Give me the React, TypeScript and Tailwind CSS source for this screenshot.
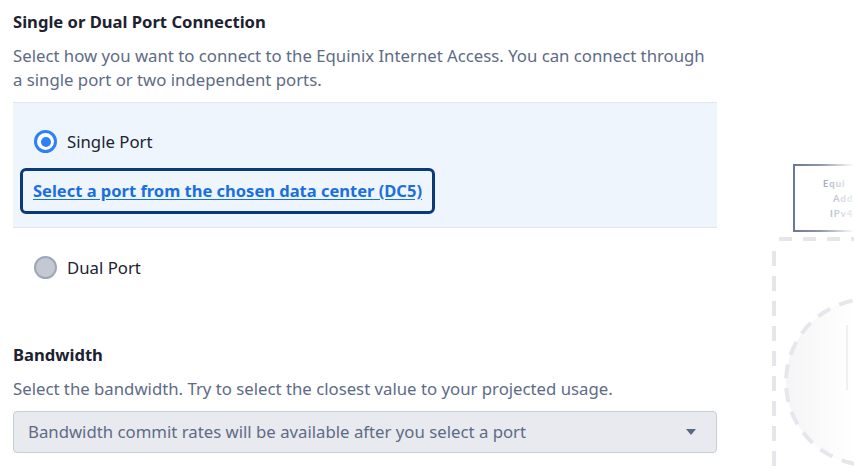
import React from "react";

const Radio = ({ checked }: { checked: boolean }) =>
  checked ? (
    <span className="flex h-[23px] w-[23px] shrink-0 items-center justify-center rounded-full border-[3px] border-[#2f7ff7] bg-white">
      <span className="h-[10px] w-[10px] rounded-full bg-[#2f7ff7]" />
    </span>
  ) : (
    <span className="h-[23px] w-[23px] shrink-0 rounded-full border-2 border-[#9ea7b8] bg-[#c3c8d3]" />
  );

// faded diagram on the right edge
const Diagram = () => (
  <svg width="137" height="472" viewBox="0 0 137 472" className="block">
    <defs>
      <linearGradient id="boxFade" x1="76" y1="0" x2="137" y2="0" gradientUnits="userSpaceOnUse">
        <stop offset="0" stopColor="#6b7894" />
        <stop offset="0.45" stopColor="#8d97ad" />
        <stop offset="1" stopColor="#ffffff" />
      </linearGradient>
      <linearGradient id="textFade" x1="100" y1="0" x2="137" y2="0" gradientUnits="userSpaceOnUse">
        <stop offset="0" stopColor="#97a1b7" />
        <stop offset="1" stopColor="#eceef3" />
      </linearGradient>
      <linearGradient id="circleFade" x1="69" y1="0" x2="137" y2="0" gradientUnits="userSpaceOnUse">
        <stop offset="0" stopColor="#f5f5f7" />
        <stop offset="1" stopColor="#ffffff" />
      </linearGradient>
    </defs>
    <rect x="77" y="165" width="120" height="66" fill="white" stroke="url(#boxFade)" strokeWidth="2" />
    <g fontFamily="Lato, 'Noto Sans', sans-serif" fontWeight="700" fontSize="9.5" fill="url(#textFade)" letterSpacing="1">
      <text x="106" y="187">Equi</text>
      <text x="116" y="202">Add</text>
      <text x="113" y="217">IPv4</text>
    </g>
    <line x1="62" y1="239" x2="137" y2="239" stroke="#e4e6eb" strokeWidth="4" strokeDasharray="13 11" />
    <line x1="57" y1="251" x2="57" y2="472" stroke="#e4e6eb" strokeWidth="4" strokeDasharray="15 10" />
    <circle cx="152" cy="382" r="83" fill="url(#circleFade)" stroke="#e6e7ec" strokeWidth="4" strokeDasharray="14 10" />
    <line x1="130" y1="325" x2="130" y2="390" stroke="#eef0f4" strokeWidth="2" />
  </svg>
);

export default function App() {
  return (
    <div className="flex h-[472px] w-[854px] overflow-hidden bg-white font-['Noto_Sans',sans-serif]">
      <div className="w-[717px] shrink-0 pl-[13px]">
        <h2 className="pt-[10px] text-[16.6px] leading-6 font-bold text-[#1c2230]">
          Single or Dual Port Connection
        </h2>
        <p className="mt-[10px] text-[16.75px] leading-6 text-[#5e6b86]">
          Select how you want to connect to the Equinix Internet Access. You can connect through a single
          port or two independent ports.
        </p>

        <div className="mt-[10px] border-y border-[#e3e6eb] bg-[#eff5fd] pt-[27px] pb-[13px]">
          <label className="ml-[21px] flex h-[23px] items-center gap-[10px]">
            <Radio checked />
            <span className="text-[16.75px] leading-6 text-[#1c2230]">Single Port</span>
          </label>
          <div className="mt-[15px] ml-[7px] flex h-[46px] w-fit items-center rounded-[6px] border-[3px] border-[#0a3a78] px-[10px]">
            <a href="#" className="text-[16.5px] leading-6 font-bold text-[#1a6fe0] underline underline-offset-2">
              Select a port from the chosen data center (DC5)
            </a>
          </div>
        </div>

        <label className="mt-[28px] ml-[21px] flex h-[23px] items-center gap-[10px]">
          <Radio checked={false} />
          <span className="text-[16.75px] leading-6 text-[#1c2230]">Dual Port</span>
        </label>

        <h2 className="mt-[64px] text-[16.6px] leading-6 font-bold text-[#1c2230]">Bandwidth</h2>
        <p className="mt-[10px] text-[16.75px] leading-6 text-[#5e6b86]">
          Select the bandwidth. Try to select the closest value to your projected usage.
        </p>
        <div className="mt-[10px] flex h-[42px] items-center justify-between rounded-[4px] border border-[#c8cdd7] bg-[#e8eaf0] pr-[20px] pl-[14px]">
          <span className="text-[16.75px] leading-6 text-[#5e6b86]">
            Bandwidth commit rates will be available after you select a port
          </span>
          <svg width="10" height="6" viewBox="0 0 10 6">
            <path d="M0 0h10L5 6z" fill="#5b6884" />
          </svg>
        </div>
      </div>
      <div className="flex-1">
        <Diagram />
      </div>
    </div>
  );
}
